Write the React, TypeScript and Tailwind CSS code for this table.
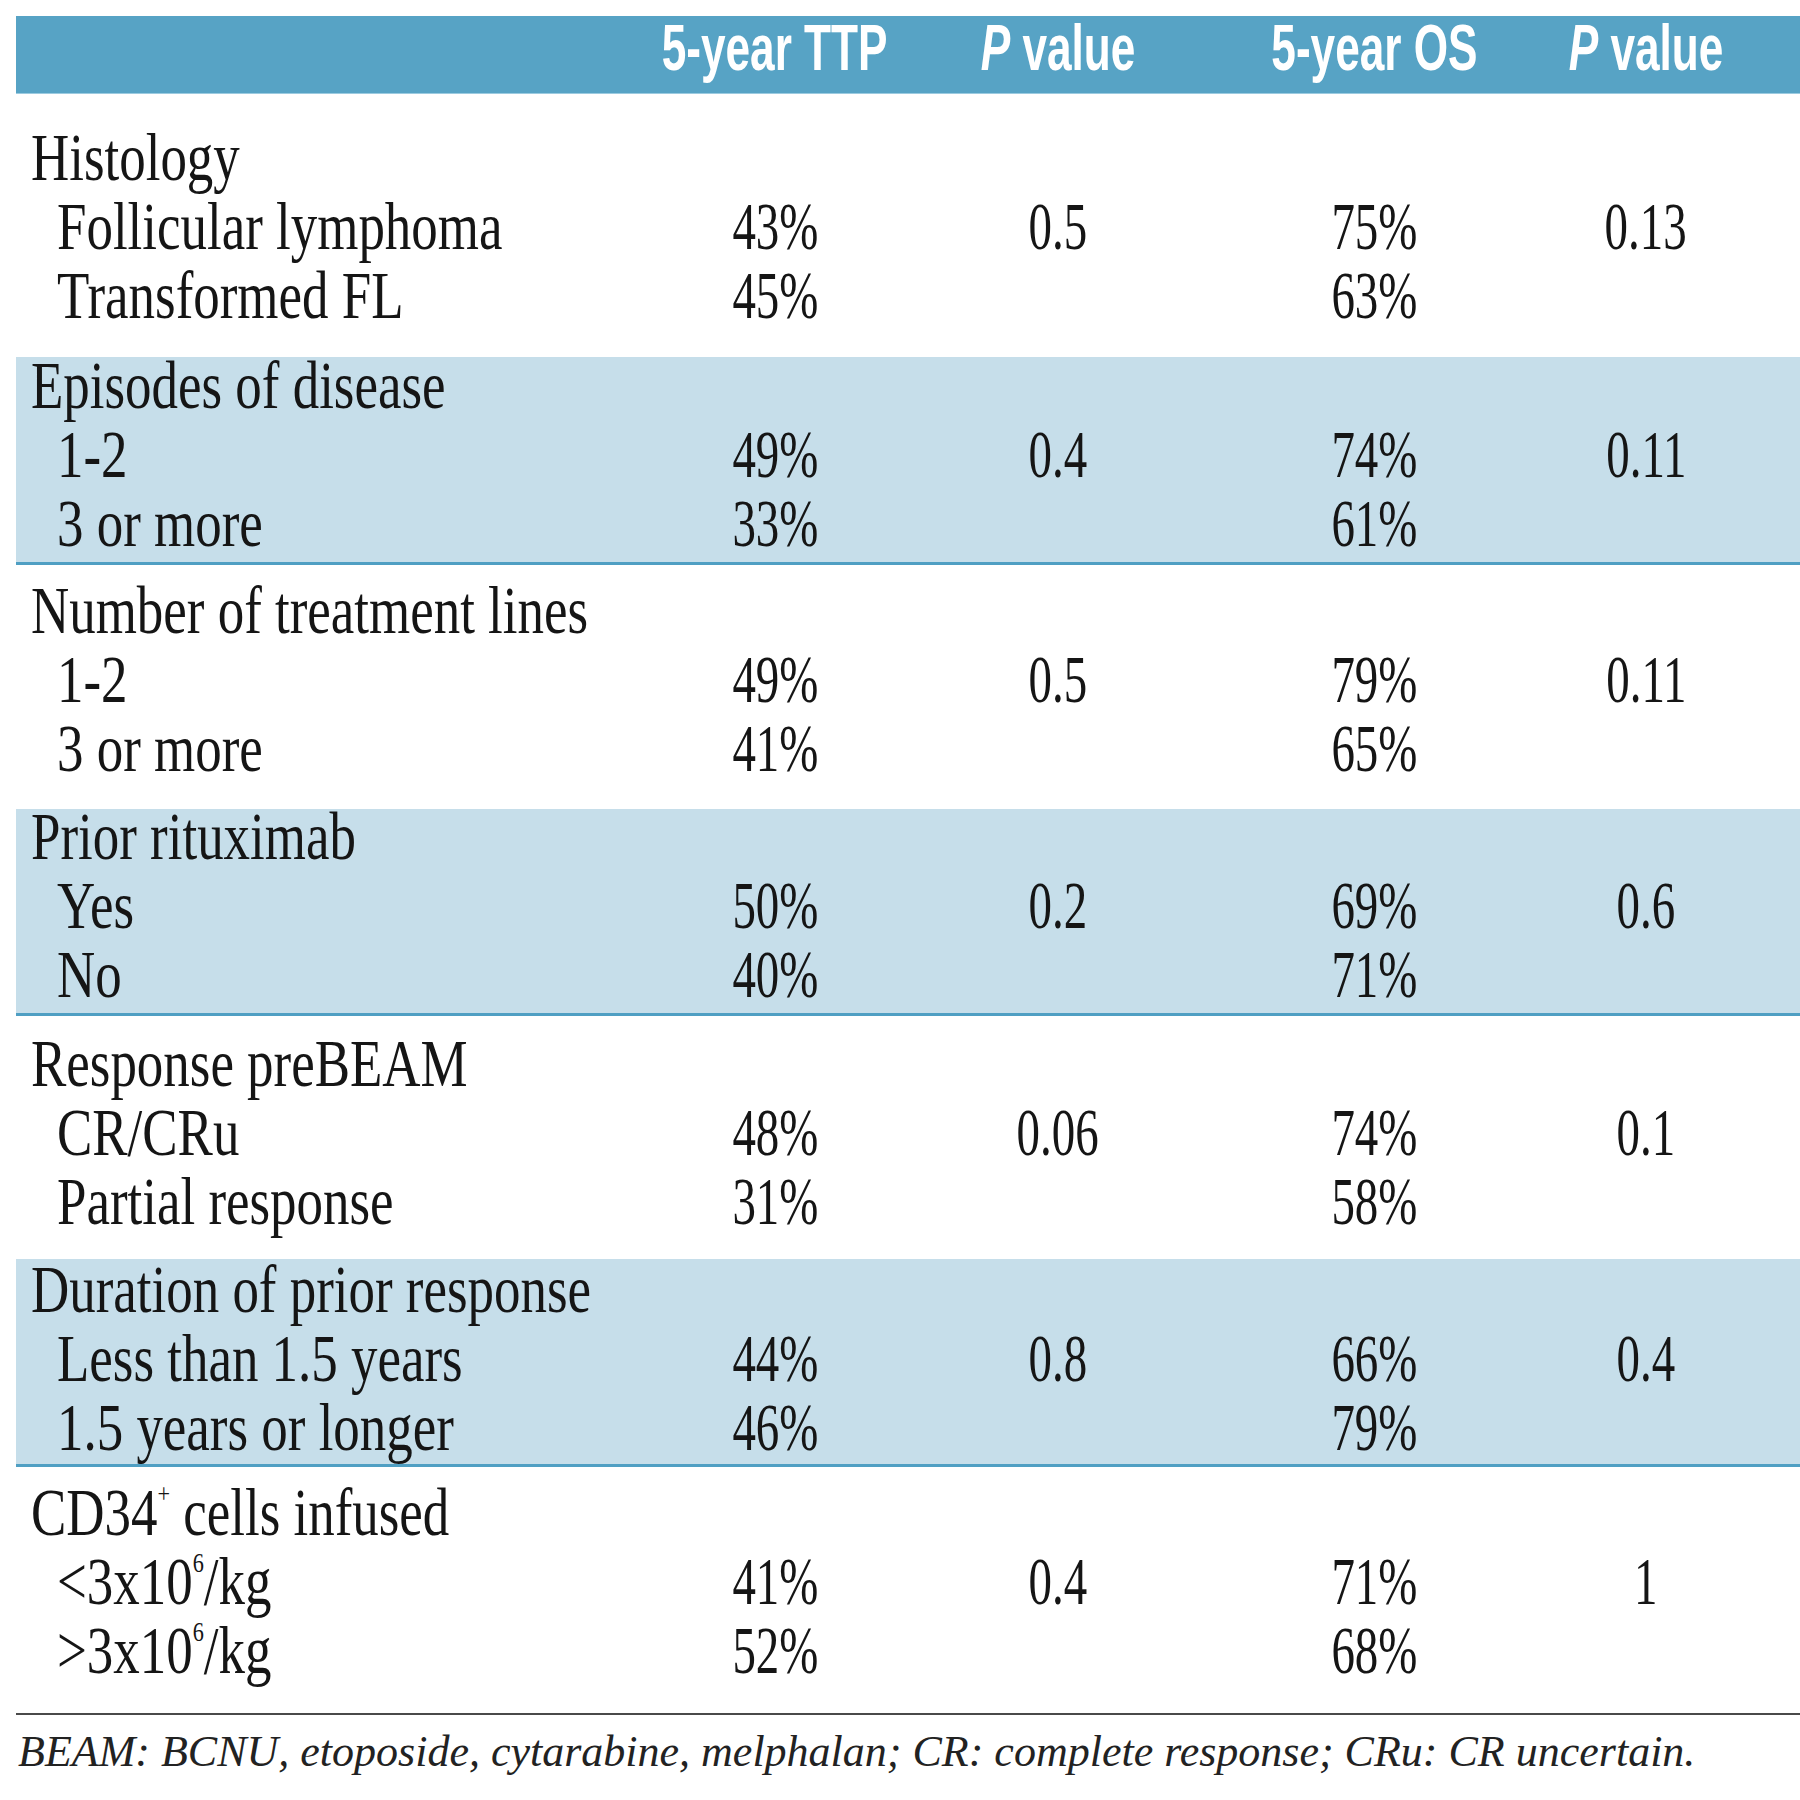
import React from "react";

type Row = [React.ReactNode, string, string, string, string];

interface Section {
  title: React.ReactNode;
  box: string;
  rows: Row[];
}

const sections: Section[] = [
  {
    title: "Histology",
    box: "h-[263px] pt-[38px] bg-white",
    rows: [
      ["Follicular lymphoma", "43%", "0.5", "75%", "0.13"],
      ["Transformed FL", "45%", "", "63%", ""],
    ],
  },
  {
    title: "Episodes of disease",
    box: "h-[208px] pt-[3px] bg-[#c6deea] border-b-[3px] border-[#4f9fc3]",
    rows: [
      ["1-2", "49%", "0.4", "74%", "0.11"],
      ["3 or more", "33%", "", "61%", ""],
    ],
  },
  {
    title: "Number of treatment lines",
    box: "h-[244px] pt-[20px] bg-white",
    rows: [
      ["1-2", "49%", "0.5", "79%", "0.11"],
      ["3 or more", "41%", "", "65%", ""],
    ],
  },
  {
    title: "Prior rituximab",
    box: "h-[207px] pt-[2px] bg-[#c6deea] border-b-[3px] border-[#4f9fc3]",
    rows: [
      ["Yes", "50%", "0.2", "69%", "0.6"],
      ["No", "40%", "", "71%", ""],
    ],
  },
  {
    title: "Response preBEAM",
    box: "h-[243px] pt-[22px] bg-white",
    rows: [
      ["CR/CRu", "48%", "0.06", "74%", "0.1"],
      ["Partial response", "31%", "", "58%", ""],
    ],
  },
  {
    title: "Duration of prior response",
    box: "h-[208px] pt-[5px] bg-[#c6deea] border-b-[3px] border-[#4f9fc3]",
    rows: [
      ["Less than 1.5 years", "44%", "0.8", "66%", "0.4"],
      ["1.5 years or longer", "46%", "", "79%", ""],
    ],
  },
  {
    title: (
      <>
        CD34<sup className="text-[0.42em] -top-[1.15em]">+</sup> cells infused
      </>
    ),
    box: "h-[246px] pt-[20px] bg-white",
    rows: [
      [
        <>
          &lt;3x10<sup className="text-[0.42em] -top-[1.15em]">6</sup>/kg
        </>,
        "41%",
        "0.4",
        "71%",
        "1",
      ],
      [
        <>
          &gt;3x10<sup className="text-[0.42em] -top-[1.15em]">6</sup>/kg
        </>,
        "52%",
        "",
        "68%",
        "",
      ],
    ],
  },
];

// column centres sit at 775, 1058, 1374 and 1646 on the page
const grid = "grid grid-cols-[618px_282px_284px_348px_196px]";

const Label: React.FC<{ children: React.ReactNode; indent?: boolean }> = ({ children, indent }) => (
  <div className={indent ? "pl-[41px] whitespace-nowrap" : "pl-[15px] whitespace-nowrap"}>
    <span className="inline-block origin-left scale-x-[0.79]">{children}</span>
  </div>
);

const Num: React.FC<{ children: React.ReactNode }> = ({ children }) => (
  <div className="flex justify-center whitespace-nowrap">
    <span className="inline-block origin-center scale-x-[0.7]">{children}</span>
  </div>
);

const HeadCell: React.FC<{ children: React.ReactNode }> = ({ children }) => (
  <div className="flex justify-center whitespace-nowrap">
    <span className="inline-block origin-center scale-x-[0.69]">{children}</span>
  </div>
);

export default function App() {
  return (
    <div className="min-h-[1800px] w-[1800px] overflow-hidden bg-white pt-[16px] pl-[16px]">
      <div className="w-[1784px]">
        <div
          className={`${grid} h-[78px] bg-[#57a3c5] border-b border-[#9ccbe0] pt-[2px] text-[64px] leading-[60px] font-bold text-white`}
          style={{ fontFamily: '"Liberation Sans", Arial, sans-serif' }}
        >
          <div />
          <HeadCell>5-year TTP</HeadCell>
          <HeadCell>
            <i>P</i> value
          </HeadCell>
          <HeadCell>5-year OS</HeadCell>
          <HeadCell>
            <i>P</i> value
          </HeadCell>
        </div>

        <div
          className="text-[67px] leading-[50px] text-[#151515]"
          style={{ fontFamily: '"Liberation Serif", "Times New Roman", serif' }}
        >
          {sections.map((s, i) => (
            <div key={i} className={`${s.box} box-border`}>
              <div className={`${grid} auto-rows-[69px]`}>
                <Label>{s.title}</Label>
                <div />
                <div />
                <div />
                <div />
                {s.rows.map((r, j) => (
                  <React.Fragment key={j}>
                    <Label indent>{r[0]}</Label>
                    <Num>{r[1]}</Num>
                    <Num>{r[2]}</Num>
                    <Num>{r[3]}</Num>
                    <Num>{r[4]}</Num>
                  </React.Fragment>
                ))}
              </div>
            </div>
          ))}
        </div>

        <div className="h-[2px] bg-[#4a4a4a]" />

        <p
          className="mt-[15px] pl-[2px] text-[44px] leading-[44px] italic text-[#222] whitespace-nowrap"
          style={{ fontFamily: '"Liberation Serif", "Times New Roman", serif' }}
        >
          BEAM: BCNU, etoposide, cytarabine, melphalan; CR: complete response; CRu: CR uncertain.
        </p>
      </div>
    </div>
  );
}
